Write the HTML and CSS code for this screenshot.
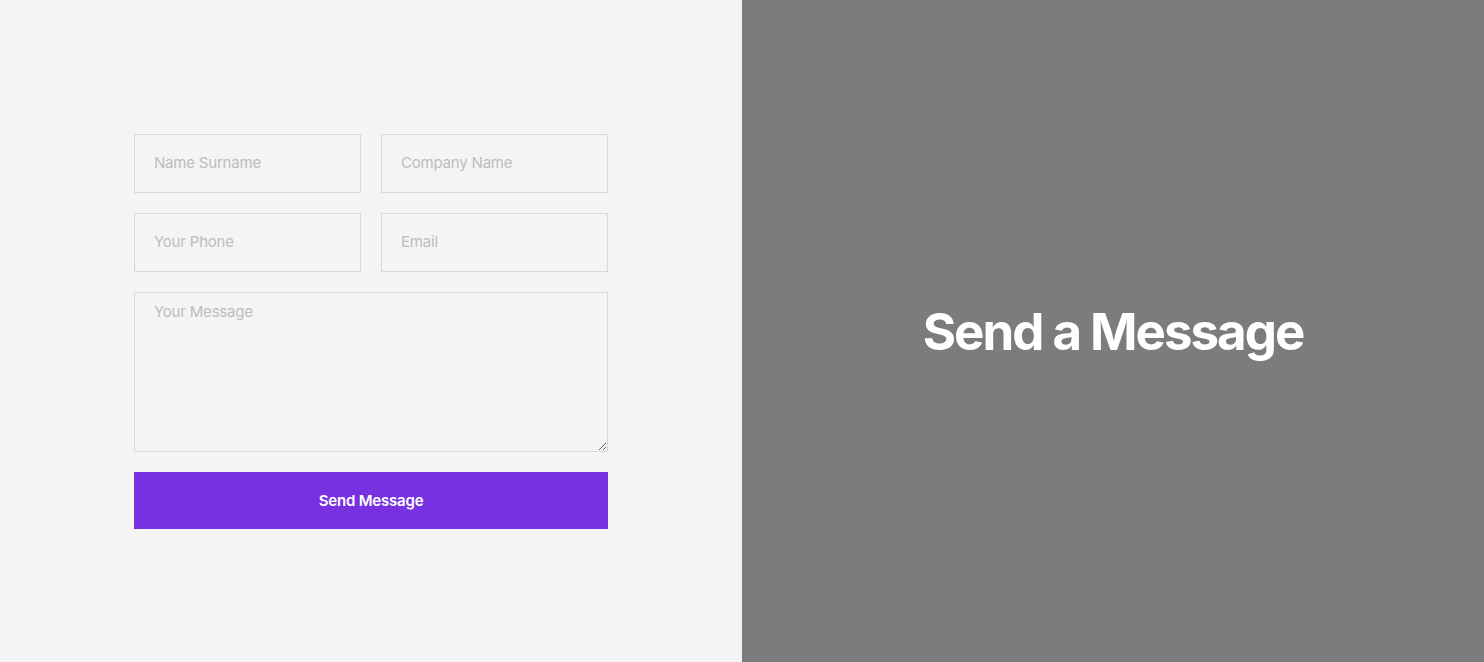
FILE: index.html
```html
<!DOCTYPE html>
<html lang="en">
<head>
    <meta charset="UTF-8">
    <meta name="viewport" content="width=device-width, initial-scale=1.0">
    <title>Send a Message</title>
    <link rel="stylesheet" href="styles.css">
</head>
<body>
    <div class="contact">
        <div class="form-side">
            <form class="contact-form">
                <div class="form-row">
                    <input type="text" placeholder="Name Surname">
                    <input type="text" placeholder="Company Name">
                </div>
                <div class="form-row">
                    <input type="tel" placeholder="Your Phone">
                    <input type="email" placeholder="Email">
                </div>
                <textarea placeholder="Your Message"></textarea>
                <button type="submit">Send Message</button>
            </form>
        </div>
        <div class="title-side">
            <h2>Send a Message</h2>
        </div>
    </div>
</body>
</html>
```

FILE: styles.css
```css
* {
    box-sizing: border-box;
}
body {
    margin: 0;
    font-family: "Inter", "Noto Sans", sans-serif;
}
.contact {
    display: grid;
    grid-template-columns: 742px 1fr;
    height: 662px;
}
.form-side {
    background-color: #f4f4f4;
    display: flex;
    align-items: center;
    justify-content: center;
}
.contact-form {
    width: 474px;
    display: flex;
    flex-direction: column;
    gap: 20px;
}
.form-row {
    display: grid;
    grid-template-columns: 1fr 1fr;
    gap: 20px;
}
input,
textarea {
    width: 100%;
    height: 59px;
    padding: 0 19px 2px;
    border: 1px solid #d9d9d9;
    background: #f4f4f4;
    font-family: inherit;
    font-size: 15px;
    color: #555;
    outline: none;
}
textarea {
    height: 160px;
    padding-top: 9px;
    resize: vertical;
}
input::placeholder,
textarea::placeholder {
    color: #bdbdbd;
    letter-spacing: -0.2px;
}
button {
    height: 57px;
    border: none;
    background-color: #7731e1;
    color: white;
    font-family: inherit;
    font-size: 15px;
    font-weight: 600;
    letter-spacing: -0.2px;
    cursor: pointer;
}
.title-side {
    background-color: #7b7c7e;
    display: flex;
    align-items: center;
    justify-content: center;
}
.title-side h2 {
    margin: 0;
    color: white;
    font-size: 51px;
    font-weight: 700;
    letter-spacing: -2px;
}
```
